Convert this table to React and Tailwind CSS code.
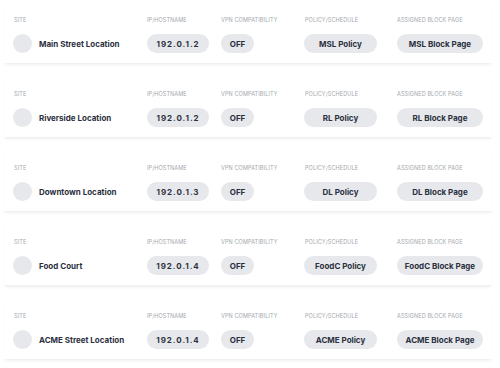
import React from "react";

const rows = [
  { site: "Main Street Location", ip: "192.0.1.2", policy: "MSL Policy", block: "MSL Block Page" },
  { site: "Riverside Location", ip: "192.0.1.2", policy: "RL Policy", block: "RL Block Page" },
  { site: "Downtown Location", ip: "192.0.1.3", policy: "DL Policy", block: "DL Block Page" },
  { site: "Food Court", ip: "192.0.1.4", policy: "FoodC Policy", block: "FoodC Block Page" },
  { site: "ACME Street Location", ip: "192.0.1.4", policy: "ACME Policy", block: "ACME Block Page" },
];

function Label({ children }) {
  return (
    <div className="h-[8px] text-[5.5px] leading-[8px] uppercase tracking-[0.02em] text-[#a3a7ad] whitespace-nowrap">
      {children}
    </div>
  );
}

function Pill({ children, cls }) {
  return (
    <div
      className={
        "h-[19px] flex items-center justify-center rounded-full bg-[#e6e8eb] text-[8px] leading-none font-bold text-[#2b3040] whitespace-nowrap " +
        cls
      }
    >
      {children}
    </div>
  );
}

export default function App() {
  return (
    <div
      className="w-[500px] h-[368px] bg-white overflow-hidden"
      style={{ fontFamily: "Inter, 'Open Sans', sans-serif" }}
    >
      <div className="flex flex-col gap-[11px] ml-[4px] w-[488px]">
        {rows.map((r, i) => (
          <div
            key={i}
            className="h-[63px] bg-white shadow-[0_3px_3px_-1px_rgba(0,0,0,0.07)] pt-[16px] pl-[9px] grid grid-cols-[133px_75px_83px_93px_auto]"
          >
            <div className="flex flex-col">
              <div className="pl-[1px]">
                <Label>Site</Label>
              </div>
              <div className="mt-[10px] flex items-center h-[19px]">
                <div className="w-[19px] h-[19px] rounded-full bg-[#e6e8eb]" />
                <span className="ml-[7px] text-[8px] leading-none font-bold text-[#2b3040] whitespace-nowrap">{r.site}</span>
              </div>
            </div>
            <div className="flex flex-col items-start">
              <div className="pl-[1px]">
                <Label>IP/Hostname</Label>
              </div>
              <div className="mt-[10px] flex pl-[1px]">
                <Pill cls="w-[62px] tracking-[0.12em]">{r.ip}</Pill>
              </div>
            </div>
            <div className="flex flex-col items-start">
              <Label>VPN Compatibility</Label>
              <div className="mt-[10px] flex">
                <Pill cls="w-[33px]">OFF</Pill>
              </div>
            </div>
            <div className="flex flex-col items-start">
              <div className="pl-[1px]">
                <Label>Policy/Schedule</Label>
              </div>
              <div className="mt-[10px] flex">
                <Pill cls="w-[73px]">{r.policy}</Pill>
              </div>
            </div>
            <div className="flex flex-col items-start">
              <Label>Assigned Block Page</Label>
              <div className="mt-[10px] flex">
                <Pill cls="w-[86px]">{r.block}</Pill>
              </div>
            </div>
          </div>
        ))}
      </div>
    </div>
  );
}
